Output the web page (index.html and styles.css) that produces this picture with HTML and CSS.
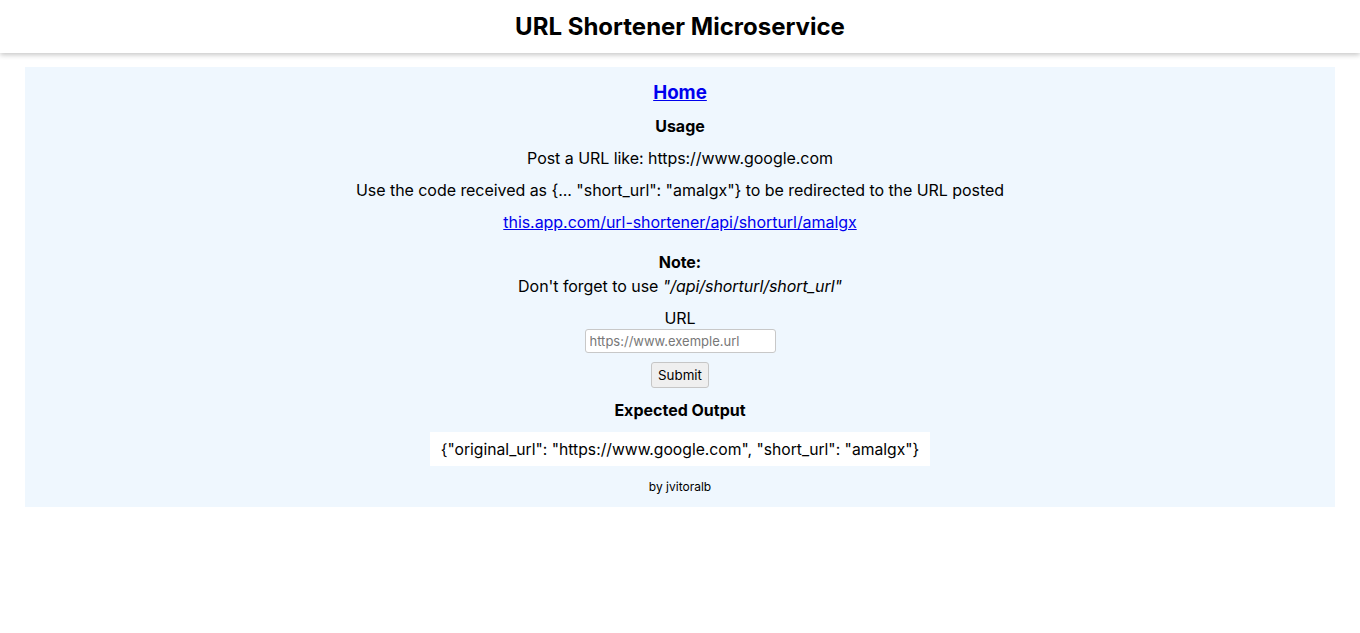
FILE: index.html
```html
<!DOCTYPE html>
<html lang="en">
<head>
<meta charset="utf-8">
<title>URL Shortener Microservice</title>
<link rel="stylesheet" href="styles.css">
</head>
<body>
<header class="topbar">
  <h1 class="title">URL Shortener Microservice</h1>
</header>
<main class="panel">
  <h2 class="home"><a href="#">Home</a></h2>
  <h3 class="heading usage">Usage</h3>
  <p class="line">Post a URL like: https://www.google.com</p>
  <p class="line">Use the code received as {... "short_url": "amalgx"} to be redirected to the URL posted</p>
  <p class="line"><a href="#">this.app.com/url-shortener/api/shorturl/amalgx</a></p>
  <div class="note">
    <div class="note-title">Note:</div>
    <div>Don't forget to use <em>"/api/shorturl/short_url"</em></div>
  </div>
  <form class="form">
    <label class="label" for="url">URL</label>
    <input class="input" id="url" type="text" placeholder="https://www.exemple.url">
    <button class="submit" type="button">Submit</button>
  </form>
  <h3 class="heading out-heading">Expected Output</h3>
  <div class="output">{"original_url": "https://www.google.com", "short_url": "amalgx"}</div>
  <footer class="credit">by jvitoralb</footer>
</main>
</body>
</html>
```
FILE: styles.css
```css
* { box-sizing: border-box; }
body {
  margin: 0;
  font-family: Inter, "Noto Sans", sans-serif;
  color: #000;
  background: #fff;
}
.topbar {
  height: 53px;
  display: flex;
  align-items: center;
  justify-content: center;
  background: #fff;
  box-shadow: 0 2px 5px rgba(0,0,0,0.22);
}
.title {
  margin: 0;
  font-size: 24px;
  font-weight: 700;
  line-height: 28px;
}
.panel {
  margin: 14px 25px 0;
  background: #eff7fe;
  padding: 14px 0 12px;
  display: flex;
  flex-direction: column;
  align-items: center;
  text-align: center;
}
.home {
  margin: 0;
  font-size: 18.72px;
  line-height: 24px;
  font-weight: 700;
}
a { color: #0000ee; text-decoration: underline; }
.heading {
  margin: 12px 0 0;
  font-size: 16px;
  line-height: 20px;
  font-weight: 700;
}
.usage { margin-top: 11px; }
.line {
  margin: 12px 0 0;
  font-size: 16px;
  line-height: 20px;
  letter-spacing: -0.05px;
}
.note {
  margin-top: 18px;
  font-size: 16px;
  line-height: 24px;
  letter-spacing: -0.05px;
}
.note-title { font-weight: 700; }
.form {
  margin-top: 9px;
  display: flex;
  flex-direction: column;
  align-items: center;
}
.label {
  font-size: 16px;
  line-height: 22px;
}
.input {
  width: 191px;
  height: 24px;
  border: 1px solid #c8c8c8;
  border-radius: 3px;
  background: #fff;
  padding: 0 4px;
  font-family: Inter, "Noto Sans", sans-serif;
  font-size: 13px;
}
.input::placeholder { color: #777; }
.submit {
  margin-top: 9px;
  height: 26px;
  padding: 0 6px;
  font-family: Inter, "Noto Sans", sans-serif;
  font-size: 13.33px;
  color: #000;
  background: #efefef;
  border: 1px solid #c6c6c6;
  border-radius: 3px;
}
.out-heading { margin-top: 12px; }
.output {
  margin-top: 12px;
  background: #fff;
  width: 500px;
  height: 34px;
  display: flex;
  align-items: center;
  justify-content: center;
  font-size: 15.7px;
}
.credit {
  margin-top: 13px;
  font-size: 12px;
  line-height: 16px;
}
```
